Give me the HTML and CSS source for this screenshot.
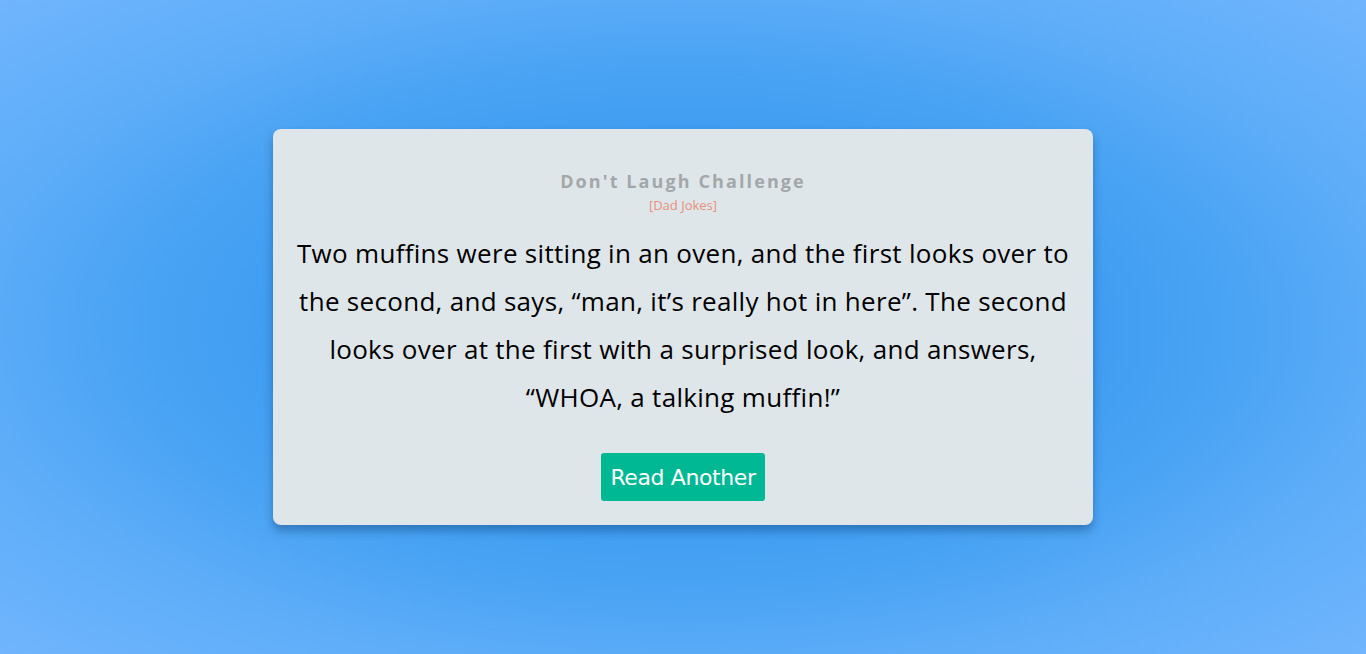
FILE: index.html
```html
<!DOCTYPE html>
<html>
<head>
<meta charset="utf-8">
<link rel="stylesheet" href="styles.css">
</head>
<body>
<main class="page">
  <section class="card">
    <h1 class="title">Don't Laugh Challenge</h1>
    <p class="tag">[Dad Jokes]</p>
    <p class="joke">Two muffins were sitting in an oven, and the first looks over to the second, and says, “man, it’s really hot in here”. The second looks over at the first with a surprised look, and answers, “WHOA, a talking muffin!”</p>
    <button class="btn">Read Another</button>
  </section>
</main>
</body>
</html>
```
FILE: styles.css
```css
html, body {
  margin: 0;
  height: 100%;
}
body {
  font-family: "Open Sans", "Noto Sans", sans-serif;
  background: radial-gradient(ellipse at center, #3596ee 0%, #3a9af0 35%, #4ba4f4 58%, #5eadf9 75%, #70b5fd 100%);
}
.page {
  height: 654px;
  display: flex;
  align-items: center;
  justify-content: center;
}
.card {
  width: 820px;
  box-sizing: border-box;
  background: #dfe6e9;
  border-radius: 8px;
  box-shadow: 0 6px 10px rgba(0, 40, 90, 0.35);
  padding: 40px 20px 24px;
  text-align: center;
}
.title {
  margin: 0;
  font-size: 18px;
  font-weight: 700;
  letter-spacing: 2.1px;
  color: #a2a7a9;
  line-height: 24px;
}
.tag {
  margin: 0;
  font-size: 13px;
  color: #e8907a;
  line-height: 24px;
}
.joke {
  margin: 12px auto 32px;
  max-width: 780px;
  font-size: 26px;
  letter-spacing: 0.3px;
  line-height: 48px;
  color: #000;
}
.btn {
  font-family: "DejaVu Sans", "Verdana", sans-serif;
  font-size: 22px;
  color: #fff;
  background: #00b894;
  border: none;
  border-radius: 3px;
  padding: 0;
  height: 48px;
  width: 164px;
  letter-spacing: -0.4px;
}
```
